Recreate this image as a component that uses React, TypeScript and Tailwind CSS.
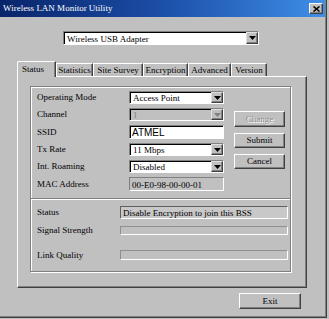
import React from "react";

const serif = { fontFamily: '"Liberation Serif", "Times New Roman", serif' };

function Arrow({ disabled = false }: { disabled?: boolean }) {
  return (
    <div className="w-[12px] h-full bg-[#c0c0c0] border-t border-l border-[#e0e0e0] border-r border-b border-r-[#404040] border-b-[#404040] shadow-[inset_-1px_-1px_0_#808080] flex items-center justify-center">
      <svg width="7" height="4" viewBox="0 0 7 4">
        <polygon points="0,0 7,0 3.5,4" fill={disabled ? "#808080" : "#000"} />
      </svg>
    </div>
  );
}

function Combo({ value, disabled = false, h = "h-[13px]" }: { value: string; disabled?: boolean; h?: string }) {
  return (
    <div
      className={`w-[95px] ${h} flex border-t border-l border-[#808080] border-b border-r border-b-white border-r-white shadow-[inset_1px_1px_0_#000] ${disabled ? "bg-[#c0c0c0]" : "bg-white"}`}
    >
      <div className={`flex-1 pl-[3px] pt-[1px] text-[9px] leading-[10px] ${disabled ? "text-[#808080]" : "text-black"}`}>{value}</div>
      <Arrow disabled={disabled} />
    </div>
  );
}

function Btn({ label, disabled = false, w = "w-[51px]", h = "h-[15px]" }: { label: string; disabled?: boolean; w?: string; h?: string }) {
  return (
    <div
      className={`${w} ${h} bg-[#c0c0c0] border-t border-l border-white border-r border-b border-r-[#404040] border-b-[#404040] shadow-[inset_-1px_-1px_0_#808080] flex items-center justify-center text-[9px] leading-none ${disabled ? "text-[#8f8f8f] [text-shadow:1px_1px_0_#fff]" : "text-black"}`}
    >
      {label}
    </div>
  );
}

function Row({ label, children, h = "h-[13px]" }: { label: string; children: React.ReactNode; h?: string }) {
  return (
    <div className={`flex items-center ${h}`}>
      <div className="w-[92px] text-[9px] leading-none">{label}</div>
      {children}
    </div>
  );
}

export default function App() {
  const tabs = [
    { name: "Statistics", w: "w-[37px]" },
    { name: "Site Survey", w: "w-[50px]" },
    { name: "Encryption", w: "w-[45px]" },
    { name: "Advanced", w: "w-[43px]" },
    { name: "Version", w: "w-[36px]" },
  ];
  return (
    <div className="w-[329px] h-[319px] bg-[#c0c0c0] text-black" style={serif}>
      <div className="w-[327px] h-[318px] border-r border-b border-[#404040] shadow-[inset_-1px_-1px_0_#808080] flex flex-col">
        {/* title bar */}
        <div className="h-[17px] w-[325px] bg-gradient-to-r from-[#0a246a] via-[#1c4fa8] to-[#3f8ee8] flex items-center pl-[3px] pr-[2px]">
          <div className="flex-1 text-white text-[9px] leading-none">Wireless LAN Monitor Utility</div>
          <div className="w-[14px] h-[11px] bg-[#c0c0c0] border-t border-l border-white border-r border-b border-r-[#404040] border-b-[#404040] shadow-[inset_-1px_-1px_0_#808080] flex items-center justify-center">
            <svg width="7" height="6" viewBox="0 0 7 6">
              <path d="M0.5 0.5 L6.5 5.5 M6.5 0.5 L0.5 5.5" stroke="#000" strokeWidth="1.6" />
            </svg>
          </div>
        </div>

        {/* adapter dropdown */}
        <div className="mt-[14px] ml-[63px] w-[196px] h-[14px] flex border-t border-l border-[#808080] border-b border-r border-b-white border-r-white shadow-[inset_1px_1px_0_#000] bg-white">
          <div className="flex-1 pl-[3px] pt-[2px] text-[9px] leading-[10px]">Wireless USB Adapter</div>
          <Arrow />
        </div>

        {/* tabs */}
        <div className="mt-[16px] ml-[17px] flex items-end h-[15px] relative z-10">
          <div className="w-[39px] h-[16px] -mb-[1px] bg-[#c0c0c0] border-t border-l border-white border-r border-r-[#404040] shadow-[inset_-1px_0_0_#808080] rounded-tl-[2px] pl-[4px] pt-[2px] text-[9px] leading-[10px]">
            Status
          </div>
          {tabs.map((t) => (
            <div
              key={t.name}
              className={`${t.w} h-[13px] bg-[#c0c0c0] border-t border-l border-white border-r border-r-[#404040] shadow-[inset_-1px_0_0_#808080] flex items-center justify-center text-[9px] leading-none`}
            >
              {t.name}
            </div>
          ))}
        </div>

        {/* panel */}
        <div className="ml-[17px] w-[290px] h-[212px] border-t border-l border-white border-r border-b border-r-[#404040] border-b-[#404040] shadow-[inset_-1px_-1px_0_#808080] pl-[12px] pt-[9px]">
          <div className="w-[261px] h-[186px] border border-[#808080] shadow-[inset_1px_1px_0_#fff,1px_1px_0_#fff] flex flex-col">
            {/* upper */}
            <div className="h-[111px] flex pl-[6px]">
              <div className="flex flex-col pt-[4px] gap-[4px]">
                <Row label="Operating Mode">
                  <Combo value="Access Point" />
                </Row>
                <Row label="Channel">
                  <Combo value="1" disabled />
                </Row>
                <Row label="SSID" h="h-[14px]">
                  <div className="w-[95px] h-[14px] bg-white border-t border-l border-[#808080] border-b border-r border-b-white border-r-white shadow-[inset_1px_1px_0_#000] pl-[2px] pt-[1px] text-[10px] leading-[11px]" style={{ fontFamily: '"Liberation Sans", Arial, sans-serif' }}>
                    ATMEL
                  </div>
                </Row>
                <Row label="Tx Rate">
                  <Combo value="11 Mbps" />
                </Row>
                <Row label="Int. Roaming">
                  <Combo value="Disabled" />
                </Row>
                <Row label="MAC Address" h="h-[14px]">
                  <div className="w-[95px] h-[14px] bg-[#c0c0c0] border-t border-l border-[#808080] border-b border-r border-b-white border-r-white pl-[2px] pt-[2px] text-[9px] leading-[10px]">
                    00-E0-98-00-00-01
                  </div>
                </Row>
              </div>
              <div className="ml-[10px] pt-[24px] flex flex-col gap-[6px]">
                <Btn label="Change" disabled h="h-[16px]" />
                <Btn label="Submit" />
                <Btn label="Cancel" />
              </div>
            </div>
            {/* divider */}
            <div className="h-[2px] border-t border-[#808080] border-b border-b-white" />
            {/* lower */}
            <div className="flex-1 pl-[6px] pt-[6px] flex flex-col">
              <div className="flex items-center h-[13px]">
                <div className="w-[83px] text-[9px] leading-none">Status</div>
                <div className="w-[168px] h-[13px] bg-[#c8c8c8] border-t border-l border-[#606060] border-b border-r border-b-white border-r-white pl-[2px] pt-[1px] text-[9px] leading-[10px]">
                  Disable Encryption to join this BSS
                </div>
              </div>
              <div className="flex items-center h-[9px] mt-[7px]">
                <div className="w-[83px] text-[9px] leading-none">Signal Strength</div>
                <div className="w-[168px] h-[9px] bg-[#c0c0c0] border-t border-l border-[#909090] border-b border-r border-b-white border-r-white" />
              </div>
              <div className="flex items-center h-[10px] mt-[15px]">
                <div className="w-[83px] text-[9px] leading-none">Link Quality</div>
                <div className="w-[168px] h-[10px] bg-[#c0c0c0] border-t border-l border-[#909090] border-b border-r border-b-white border-r-white" />
              </div>
            </div>
          </div>
        </div>

        {/* exit */}
        <div className="mt-[5px] ml-[239px]">
          <Btn label="Exit" w="w-[62px]" h="h-[16px]" />
        </div>
      </div>
    </div>
  );
}
